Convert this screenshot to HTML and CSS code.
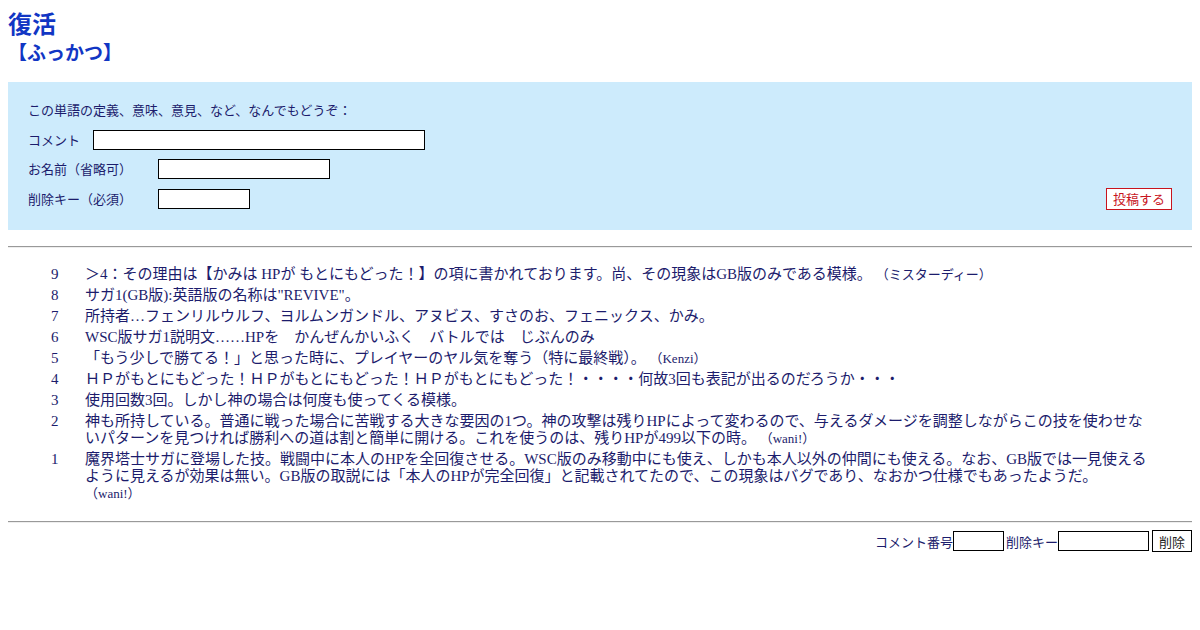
FILE: index.html
```html
<!DOCTYPE html>
<html lang="ja">
<head>
  <meta charset="UTF-8" />
  <title>復活【ふっかつ】</title>
  <link rel="stylesheet" href="styles.css">
</head>
<body>
  <h1 class="word">復活</h1>
  <h2 class="yomi">【ふっかつ】</h2>

  <form class="post-box">
    <p class="lead">この単語の定義、意味、意見、など、なんでもどうぞ：</p>
    <div class="row">
      <label class="short" for="comment">コメント</label>
      <input type="text" id="comment" class="in-comment" />
    </div>
    <div class="row">
      <label class="long" for="name">お名前（省略可）</label>
      <input type="text" id="name" class="in-name" />
    </div>
    <div class="row last">
      <div>
        <label class="long" for="key">削除キー（必須）</label>
        <input type="password" id="key" class="in-key" />
      </div>
      <button type="button" class="post-btn">投稿する</button>
    </div>
  </form>

  <hr />

  <div class="comments">
    <div class="num">9</div>
    <div class="text">＞4：その理由は【かみは HPが もとにもどった！】の項に書かれております。尚、その現象はGB版のみである模様。 <span class="who">（ミスターディー）</span></div>
    <div class="num">8</div>
    <div class="text">サガ1(GB版):英語版の名称は"REVIVE"。</div>
    <div class="num">7</div>
    <div class="text">所持者…フェンリルウルフ、ヨルムンガンドル、アヌビス、すさのお、フェニックス、かみ。</div>
    <div class="num">6</div>
    <div class="text">WSC版サガ1説明文……HPを　かんぜんかいふく　バトルでは　じぶんのみ</div>
    <div class="num">5</div>
    <div class="text">「もう少しで勝てる！」と思った時に、プレイヤーのヤル気を奪う（特に最終戦）。 <span class="who">（Kenzi）</span></div>
    <div class="num">4</div>
    <div class="text">ＨＰがもとにもどった！ＨＰがもとにもどった！ＨＰがもとにもどった！・・・・何故3回も表記が出るのだろうか・・・</div>
    <div class="num">3</div>
    <div class="text">使用回数3回。しかし神の場合は何度も使ってくる模様。</div>
    <div class="num">2</div>
    <div class="text">神も所持している。普通に戦った場合に苦戦する大きな要因の1つ。神の攻撃は残りHPによって変わるので、与えるダメージを調整しながらこの技を使わせないパターンを見つければ勝利への道は割と簡単に開ける。これを使うのは、残りHPが499以下の時。 <span class="who">（wani!）</span></div>
    <div class="num">1</div>
    <div class="text">魔界塔士サガに登場した技。戦闘中に本人のHPを全回復させる。WSC版のみ移動中にも使え、しかも本人以外の仲間にも使える。なお、GB版では一見使えるように見えるが効果は無い。GB版の取説には「本人のHPが完全回復」と記載されてたので、この現象はバグであり、なおかつ仕様でもあったようだ。 <span class="who">（wani!）</span></div>
  </div>

  <hr class="bottom-rule" />

  <form class="delete-box">
    <label for="delnum">コメント番号</label><input type="text" id="delnum" class="in-num" /><label for="delkey">削除キー</label><input type="password" id="delkey" class="in-delkey" /><button type="button" class="del-btn">削除</button>
  </form>
</body>
</html>
```

FILE: styles.css
```css
body {
  margin: 8px;
  font-family: "Liberation Serif", "Noto Sans CJK JP", serif;
  color: #1c1c6c;
  background: #fff;
}
.word {
  margin: 0 0 3px;
  font-family: "Noto Sans CJK JP", sans-serif;
  font-size: 24px;
  line-height: 30px;
  color: #1136c4;
}
.yomi {
  margin: 0 0 19px;
  font-family: "Noto Sans CJK JP", sans-serif;
  font-size: 19px;
  line-height: 22px;
  color: #1136c4;
}
.post-box {
  background-color: #cdebfc;
  padding: 20px 20px 20px;
  font-family: "Noto Sans CJK JP", sans-serif;
  font-size: 13px;
  color: #1c1c6c;
}
.lead {
  margin: 0 0 12px;
  line-height: 16px;
}
.row {
  display: flex;
  align-items: center;
  margin-bottom: 9px;
}
.row.last {
  justify-content: space-between;
  margin-bottom: 0;
}
.row.last > div {
  display: flex;
  align-items: center;
}
.row label {
  display: inline-block;
  line-height: 16px;
}
.short {
  width: 65px;
}
.long {
  width: 130px;
}
input[type="text"],
input[type="password"] {
  box-sizing: border-box;
  height: 20px;
  padding: 1px 3px;
  margin: 0;
  border: 1px solid #000;
  background: #fff;
  font-size: 13px;
}
.in-comment {
  width: 332px;
}
.in-name {
  width: 172px;
}
.in-key {
  width: 92px;
}
.post-btn {
  box-sizing: border-box;
  height: 22px;
  width: 66px;
  padding: 0;
  border: 1px solid #c8141e;
  background: #fff;
  color: #c8141e;
  font-family: "Noto Sans CJK JP", sans-serif;
  font-size: 13px;
  line-height: 18px;
}
hr {
  margin: 16px 0 0;
  border: none;
  border-top: 1px solid #999;
  border-bottom: 1px solid #eee;
  height: 0;
}
hr.bottom-rule {
  margin-top: 0;
}
.comments {
  display: grid;
  grid-template-columns: 77px 1062px;
  row-gap: 4px;
  padding: 18px 0 19px;
  font-size: 15px;
  line-height: 17px;
}
.num {
  padding-left: 43px;
}
.who {
  font-size: 13px;
  line-height: 14px;
}
.delete-box {
  display: flex;
  justify-content: flex-end;
  align-items: center;
  margin-top: 7px;
  font-family: "Noto Sans CJK JP", sans-serif;
  font-size: 13px;
  color: #1c1c6c;
}
.in-num {
  width: 51px;
}
.in-delkey {
  width: 91px;
}
.delete-box label + input {
  margin-right: 2px;
}
.del-btn {
  box-sizing: border-box;
  margin-left: 1px;
  height: 22px;
  width: 40px;
  padding: 0;
  border: 1px solid #000;
  background: #fff;
  color: #222;
  font-family: "Noto Sans CJK JP", sans-serif;
  font-size: 13px;
}
```
